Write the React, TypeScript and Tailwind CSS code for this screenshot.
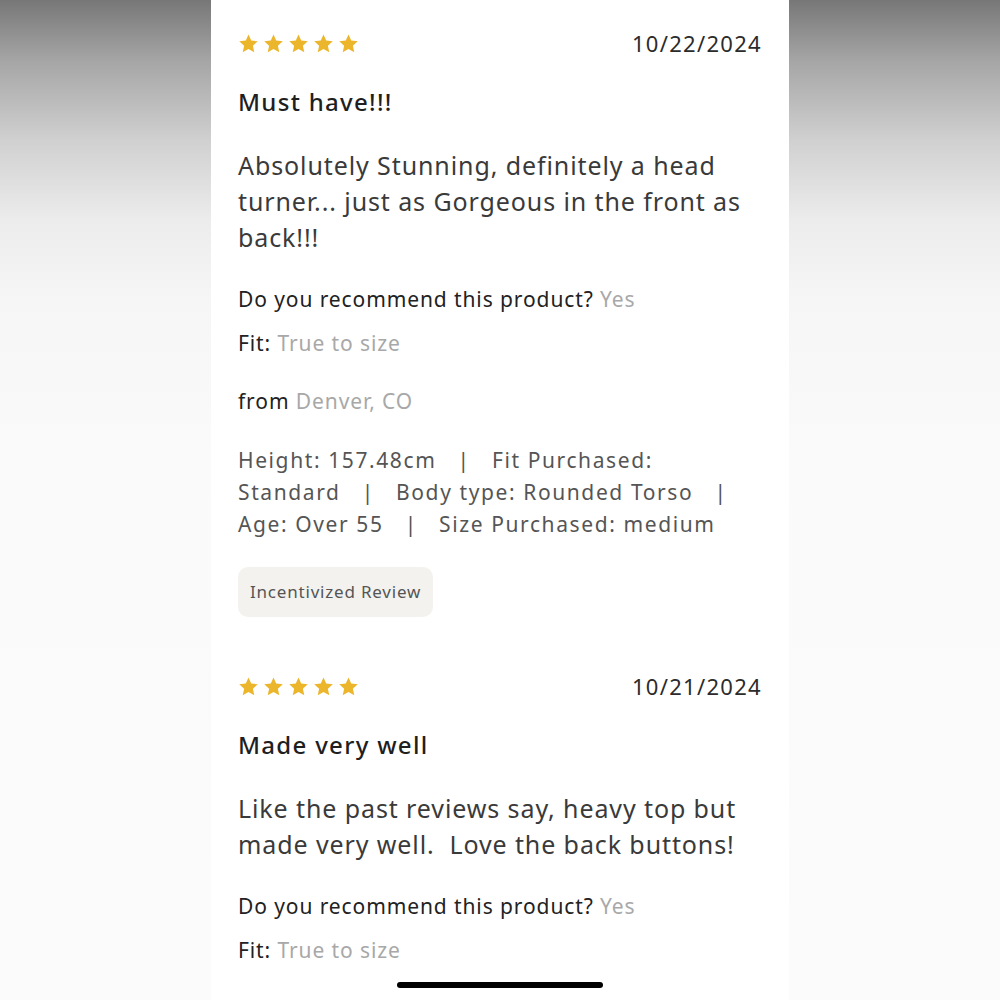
const font = { fontFamily: "'Noto Sans', Lato, sans-serif" };

type Review = {
  date: string;
  title: string;
  body: string[];
  fit: string;
  from?: string;
  meta?: string[];
  incentivized?: boolean;
};

const reviews: Review[] = [
  {
    date: "10/22/2024",
    title: "Must have!!!",
    body: [
      "Absolutely Stunning, definitely a head",
      "turner... just as Gorgeous in the front as",
      "back!!!",
    ],
    fit: "True to size",
    from: "Denver, CO",
    meta: [
      "Height: 157.48cm \u00a0 | \u00a0 Fit Purchased:",
      "Standard \u00a0 | \u00a0 Body type: Rounded Torso \u00a0 |",
      "Age: Over 55 \u00a0 | \u00a0 Size Purchased: medium",
    ],
    incentivized: true,
  },
  {
    date: "10/21/2024",
    title: "Made very well",
    body: ["Like the past reviews say, heavy top but", "made very well.\u00a0 Love the back buttons!"],
    fit: "True to size",
  },
];

function Star() {
  return (
    <svg viewBox="0 0 24 24" className="w-[21px] h-[21px]">
      <path
        d="M12 1.8l3.1 6.9 7.5.8-5.6 5.1 1.6 7.4L12 18.2l-6.6 3.8L7 14.6 1.4 9.5l7.5-.8z"
        fill="#EBB62B"
      />
    </svg>
  );
}

function ReviewCard({ r }: { r: Review }) {
  return (
    <div className="flex flex-col">
      <div className="flex items-center justify-between h-[44px]">
        <div className="flex gap-[4px]">
          {[0, 1, 2, 3, 4].map((i) => (
            <Star key={i} />
          ))}
        </div>
        <span className="text-[22px] text-[#2b2b2b] tracking-[1.3px]">{r.date}</span>
      </div>
      <h2 className="mt-[21px] text-[24px] leading-[32px] text-[#1f1f1f] tracking-[1.3px] font-medium">
        {r.title}
      </h2>
      <p className="mt-[29px] text-[25px] leading-[36px] text-[#3a3a3a] tracking-[0.9px]">
        {r.body.map((line, i) => (
          <span key={i} className="block">
            {line}
          </span>
        ))}
      </p>
      <p className="mt-[29px] text-[21px] leading-[30px] text-[#222] tracking-[0.9px]">
        Do you recommend this product? <span className="text-[#a8a8a8]">Yes</span>
      </p>
      <p className="mt-[14px] text-[21px] leading-[30px] text-[#222] tracking-[0.9px]">
        Fit: <span className="text-[#a8a8a8]">{r.fit}</span>
      </p>
      {r.from && (
        <p className="mt-[28px] text-[21px] leading-[30px] text-[#222] tracking-[0.9px]">
          from <span className="text-[#a8a8a8]">{r.from}</span>
        </p>
      )}
      {r.meta && (
        <p className="mt-[28px] text-[21px] leading-[32px] text-[#555] tracking-[1.6px]">
          {r.meta.map((line, i) => (
            <span key={i} className="block whitespace-pre">
              {line}
            </span>
          ))}
        </p>
      )}
      {r.incentivized && (
        <div className="mt-[27px] self-start rounded-[10px] bg-[#f3f2ef] px-[12px] h-[50px] flex items-center text-[17px] text-[#555] tracking-[0.8px]">
          Incentivized Review
        </div>
      )}
    </div>
  );
}

export default function App() {
  return (
    <div
      className="w-[1000px] h-[1000px] flex justify-center overflow-hidden bg-[linear-gradient(to_bottom,#777_0%,#a5a5a5_6%,#d0d0d0_14%,#ececec_22%,#f6f6f6_30%,#fafafa_45%,#fbfbfb_100%)]"
      style={font}
    >
      <div className="relative w-[578px] h-full bg-white px-[27px] pt-[21px]">
        <div className="flex flex-col gap-[47px]">
          {reviews.map((r) => (
            <ReviewCard key={r.date} r={r} />
          ))}
        </div>
        <div className="absolute left-[186px] bottom-[12px] w-[206px] h-[6px] rounded-full bg-black" />
      </div>
    </div>
  );
}
